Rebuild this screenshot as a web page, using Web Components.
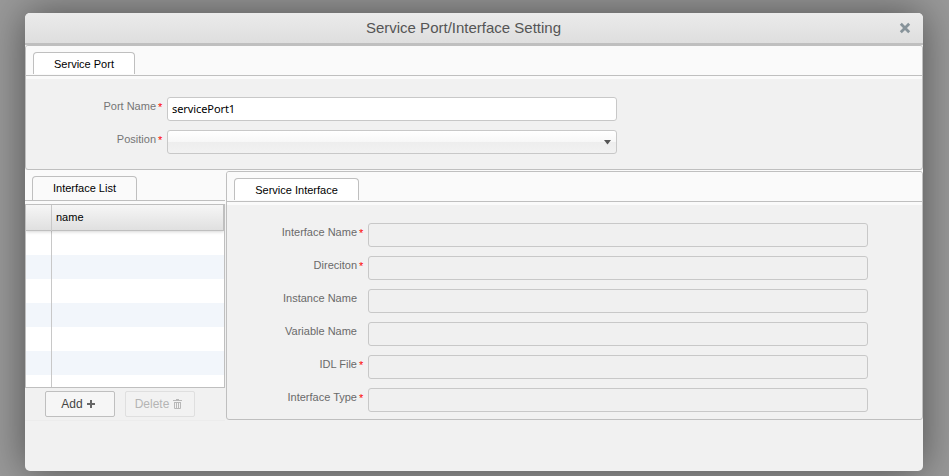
<!DOCTYPE html>
<html lang="en">
<head>
<meta charset="utf-8">
<title>Service Port/Interface Setting</title>
<style>
html, body { margin: 0; height: 100%; overflow: hidden; }
body { background: #999; padding: 13px 26px 0 25px; box-sizing: border-box; font: 11px/14px "Liberation Sans", Arial, sans-serif; color: #000; }
.lower { display: grid; grid-template-columns: 200px 697px; column-gap: 1px; padding-top: 1px; background: linear-gradient(#fafafa 34px, #f1f1f1 34px); --label-color: #6a6a6a; }
.upper { height: 125px; }
</style>
</head>
<body>
<modal-window caption="Service Port/Interface Setting">
  <tab-panel class="upper" caption="Service Port" style="--tab-width:102px;--form-top:18px">
    <form-row label="Port Name" required style="--label-width:130px;--field-width:450px"><text-field value="servicePort1"></text-field></form-row>
    <form-row label="Position" required style="--label-width:130px;--field-width:450px"><select-field></select-field></form-row>
  </tab-panel>
  <div class="lower">
    <interface-list caption="Interface List"></interface-list>
    <tab-panel caption="Service Interface" style="--tab-width:125px;--form-top:18px;height:249px">
      <form-row label="Interface Name" required><text-field disabled></text-field></form-row>
      <form-row label="Direciton" required><text-field disabled></text-field></form-row>
      <form-row label="Instance Name"><text-field disabled></text-field></form-row>
      <form-row label="Variable Name"><text-field disabled></text-field></form-row>
      <form-row label="IDL File" required><text-field disabled></text-field></form-row>
      <form-row label="Interface Type" required><text-field disabled></text-field></form-row>
    </tab-panel>
  </div>
</modal-window>
<script>
class Base extends HTMLElement {
  constructor() {
    super();
    this.attachShadow({ mode: 'open' });
  }
  connectedCallback() { this.shadowRoot.innerHTML = this.render(); }
  text(name) { return this.getAttribute(name) || ''; }
}

customElements.define('modal-window', class extends Base {
  render() {
    return `<style>
      :host { display: flex; flex-direction: column; height: 458px; background: #f1f1f1; border-radius: 5px; box-shadow: 0 0 40px rgba(0,0,0,.48); }
      header { height: 30px; display: flex; align-items: center; background: linear-gradient(#ebebeb, #dedede); border-bottom: 2px solid #bfbfbf; border-radius: 5px 5px 0 0; padding-right: 12px; }
      h1 { flex: 1; margin: 0; text-align: center; font: 15px/20px "Liberation Sans", Arial, sans-serif; color: #555; padding-left: 3px; }
      svg { display: block; width: 12px; height: 12px; }
    </style>
    <header><h1>${this.text('caption')}</h1>
      <svg viewBox="0 0 12 12"><path d="M1.8 1.8 10.2 10.2M10.2 1.8 1.8 10.2" stroke="#87939a" stroke-width="2.8"/></svg>
    </header><slot></slot>`;
  }
});

customElements.define('tab-panel', class extends Base {
  render() {
    return `<style>
      :host { display: flex; flex-direction: column; box-sizing: border-box; border: 1px solid #bfbfbf; border-radius: 3px; background: #f1f1f1; overflow: hidden; }
      nav { box-sizing: border-box; height: 30px; padding: 6px 0 1px 7px; display: flex; background: #fafafa; border-bottom: 1px solid #bfbfbf; }
      .tab { box-sizing: border-box; width: var(--tab-width); border: 1px solid #bfbfbf; border-bottom: 0; border-radius: 4px 4px 0 0; background: #fff; padding-top: 4px; text-align: center; }
      main { flex: 1; border-top: 3px solid #fafafa; padding-top: var(--form-top); display: flex; flex-direction: column; gap: 9px; }
    </style>
    <nav><div class="tab">${this.text('caption')}</div></nav><main><slot></slot></main>`;
  }
});

customElements.define('form-row', class extends Base {
  render() {
    return `<style>
      :host { display: grid; grid-template-columns: var(--label-width, 130px) 11px var(--field-width, 500px); height: 24px; }
      label { text-align: right; color: var(--label-color, #757575); padding-top: 2px; }
      i { font-style: normal; color: #f00; padding: 3px 0 0 2px; }
    </style>
    <label>${this.text('label')}</label><i>${this.hasAttribute('required') ? '*' : ''}</i><slot></slot>`;
  }
});

customElements.define('text-field', class extends Base {
  render() {
    return `<style>
      :host { display: block; box-sizing: border-box; height: 24px; border: 1px solid #c8c8c8; border-radius: 3px; background: #fff; padding: 0 4px; font: 11px/22px "Noto Sans", sans-serif; letter-spacing: -.08px; color: #000; }
      :host([disabled]) { background: #f0f0f0; }
    </style>${this.text('value')}`;
  }
});

customElements.define('select-field', class extends Base {
  render() {
    return `<style>
      :host { display: flex; justify-content: flex-end; align-items: center; box-sizing: border-box; height: 24px; border: 1px solid #c8c8c8; border-radius: 3px; background: linear-gradient(#fff, #f7f7f7 50%, #ededed 50%, #f2f2f2); padding-right: 5px; }
      svg { display: block; width: 7px; height: 6px; }
    </style><svg viewBox="0 0 7 6"><path d="M0 1H7L3.5 5.5Z" fill="#555"/></svg>`;
  }
});

customElements.define('tool-button', class extends Base {
  render() {
    return `<style>
      :host { box-sizing: border-box; display: flex; align-items: center; justify-content: center; gap: 4px; padding-right: 4px; width: 70px; height: 26px; border: 1px solid #bfbfbf; border-radius: 2px; background: #f6f6f6; color: #444; font-size: 12px; }
      :host([disabled]) { border-color: #dfdfdf; background: #f2f2f2; color: #b5b5b5; padding-right: 3px; }
    </style><slot></slot>`;
  }
});

customElements.define('interface-list', class extends Base {
  render() {
    const rows = Array.from({ length: 7 }, () => '<div class="row"><b></b></div>').join('');
    return `<style>
      :host { display: flex; flex-direction: column; background: #f1f1f1; height: 249px; border-bottom: 1px solid #ececec; }
      nav { box-sizing: border-box; height: 30px; display: flex; padding: 5px 0 0 7px; background: #fafafa; border-bottom: 1px solid #bfbfbf; }
      .tab { box-sizing: border-box; width: 105px; border: 1px solid #bfbfbf; border-bottom: 0; border-radius: 4px 4px 0 0; padding-top: 4px; text-align: center; }
      .grid { box-sizing: border-box; height: 184px; border: 1px solid #bfbfbf; overflow: hidden; background: #fff; flex: none; }
      .space { height: 3px; background: #fafafa; }
      .head { position: relative; box-sizing: border-box; height: 26px; display: flex; background: linear-gradient(#f6f6f6, #e0e0e0); border-bottom: 1px solid #bfbfbf; box-shadow: 0 1px 3px rgba(0,0,0,.16); }
      .head span { flex: 1; padding: 5px 0 0 4px; border-right: 1px solid #bfbfbf; }
      b { display: block; box-sizing: border-box; width: 26px; border-right: 1px solid #c8c8c8; }
      .head b { height: 26px; }
      .row { height: 24px; display: flex; }
      .row:nth-child(odd) { background: #f2f6fb; }
      footer { display: flex; gap: 10px; padding: 3px 0 0 20px; }
      svg { display: block; }
    </style>
    <nav><div class="tab">${this.text('caption')}</div></nav>
    <div class="space"></div>
    <div class="grid"><div class="head"><b></b><span>name</span></div>${rows}</div>
    <footer>
      <tool-button>Add <svg width="8" height="8" viewBox="0 0 8 8"><path d="M4 0V8M0 4H8" stroke="#666" stroke-width="2"/></svg></tool-button>
      <tool-button disabled>Delete <svg width="9" height="10" viewBox="0 0 9 10"><path d="M0 1.5H9M3 .5H6M1.5 3V9.5H7.5V3M3.5 3V9M5.5 3V9M1 3.5H8" fill="none" stroke="#b8b8b8"/></svg></tool-button>
    </footer>`;
  }
});
</script>
</body>
</html>
